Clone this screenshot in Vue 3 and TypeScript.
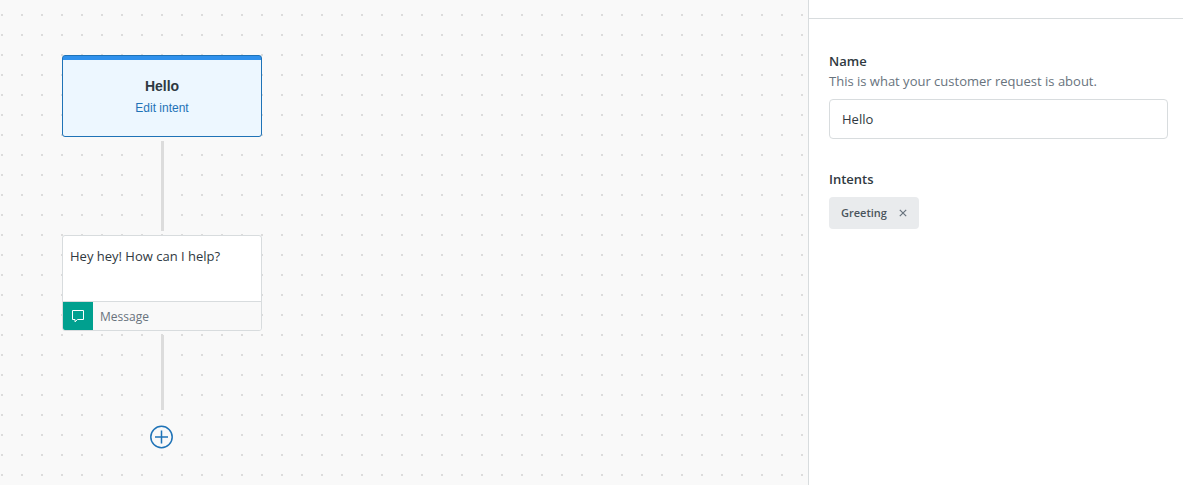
<script setup lang="ts">
import { ref } from 'vue'

const name = ref('Hello')
const intents = ref<string[]>(['Greeting'])

function removeIntent(intent: string) {
  intents.value = intents.value.filter((item) => item !== intent)
}
</script>

<template>
  <div class="builder">
    <main class="canvas">
      <div class="flow">
        <section class="node intent-node">
          <h2 class="intent-title">Hello</h2>
          <a class="intent-link" href="#">Edit intent</a>
        </section>
        <div class="connector"></div>
        <section class="node message-node">
          <p class="message-text">Hey hey! How can I help?</p>
          <footer class="message-footer">
            <span class="message-icon">
              <svg width="14" height="14" viewBox="0 0 14 14" fill="none" stroke="#fff" aria-hidden="true">
                <path d="M1.500 1.500H12.500V10.500H6.500L4 12.800V10.500H1.500Z" />
              </svg>
            </span>
            <span class="message-type">Message</span>
          </footer>
        </section>
        <div class="connector short"></div>
        <button class="add" type="button" aria-label="Add step">
          <svg width="24" height="24" viewBox="0 0 24 24" fill="none" stroke="#1f73b7" stroke-width="1.500" aria-hidden="true">
            <circle cx="11.500" cy="12" r="10.700" />
            <path d="M11.500 5.500V18.500M5 12H18" />
          </svg>
        </button>
      </div>
    </main>

    <aside class="panel">
      <header class="panel-header"></header>
      <form class="panel-body" @submit.prevent>
        <div class="field">
          <label class="label" for="name">Name</label>
          <p id="name-hint" class="hint">This is what your customer request is about.</p>
          <input id="name" v-model="name" class="input" type="text" aria-describedby="name-hint" />
        </div>
        <div class="field" role="group" aria-labelledby="intents-label">
          <span id="intents-label" class="label">Intents</span>
          <div class="tags">
            <span v-for="intent in intents" :key="intent" class="tag">
              {{ intent }}
              <button class="tag-remove" type="button" :aria-label="`Remove ${intent}`" @click="removeIntent(intent)">
                <svg width="8" height="8" viewBox="0 0 8 8" fill="none" stroke="#68737d" stroke-width="1.200" aria-hidden="true">
                  <path d="M0.800 0.800L7.200 7.200M7.200 0.800L0.800 7.200" />
                </svg>
              </button>
            </span>
          </div>
        </div>
      </form>
    </aside>
  </div>
</template>

<style>
body {
  margin: 0;
}
</style>

<style scoped>
.builder {
  display: flex;
  min-height: 100vh;
  font-family: "Open Sans", "Noto Sans", sans-serif;
  font-size: 13px;
  line-height: 20px;
  color: #2f3941;
}

.canvas {
  flex: 1;
  padding: 55px 62px 36px;
  background-color: #f9f9f9;
  background-image: conic-gradient(from 270deg at 2px 2px, #dcdcdc 90deg, transparent 0);
  background-size: 20px 20px;
  background-position: 1px 14px;
}

.flow {
  display: flex;
  flex-direction: column;
  align-items: center;
  gap: 4px;
  width: 200px;
}

.node {
  box-sizing: border-box;
  width: 100%;
  border: 1px solid #d8dcde;
  border-radius: 3px;
  overflow: hidden;
}

.intent-node {
  display: flex;
  flex-direction: column;
  align-items: center;
  height: 82px;
  padding-top: 20px;
  border-color: #1f73b7;
  background: linear-gradient(#3091ec 4px, #edf7ff 4px);
  font-family: "Liberation Sans", Arial, sans-serif;
}

.intent-title {
  margin: 0;
  font-size: 14px;
  line-height: 20px;
  font-weight: 700;
}

.intent-link {
  font-size: 12px;
  line-height: 24px;
  color: #1f73b7;
  text-decoration: none;
}

.connector {
  width: 3px;
  height: 90px;
  background: #dcdcdc;
}

.connector.short {
  height: 75px;
}

.message-node {
  background: #fff;
}

.message-text {
  min-height: 55px;
  margin: 0;
  padding: 10px 7px 0;
}

.message-footer {
  display: flex;
  height: 28px;
  border-top: 1px solid #d8dcde;
  background: #f9f9f9;
}

.message-icon {
  display: flex;
  align-items: center;
  justify-content: center;
  width: 30px;
  background: #00a08f;
}

.message-type {
  padding-left: 7px;
  font-size: 12px;
  line-height: 29px;
  color: #68737d;
}

.add {
  display: flex;
  margin-top: 11px;
  padding: 0;
  border: 0;
  border-radius: 50%;
  background: #f9f9f9;
  cursor: pointer;
}

.panel {
  box-sizing: border-box;
  width: 375px;
  border-left: 1px solid #d8dcde;
  background: #fff;
}

.panel-header {
  height: 18px;
  border-bottom: 1px solid #d8dcde;
}

.panel-body {
  display: flex;
  flex-direction: column;
  gap: 30px;
  padding: 32px 15px 32px 20px;
}

.label {
  display: block;
  font-weight: 600;
}

.hint {
  margin: 0;
  color: #68737d;
}

.input {
  box-sizing: border-box;
  display: block;
  width: 100%;
  height: 40px;
  margin-top: 8px;
  padding: 0 12px;
  border: 1px solid #d8dcde;
  border-radius: 4px;
  background: #fff;
  font: inherit;
  color: inherit;
}

.tags {
  display: flex;
  gap: 8px;
  margin-top: 8px;
}

.tag {
  display: flex;
  align-items: center;
  gap: 12px;
  height: 32px;
  padding: 0 12px;
  border-radius: 4px;
  background: #e9ebed;
  font-size: 11px;
  font-weight: 600;
  color: #49545c;
}

.tag-remove {
  display: flex;
  padding: 0;
  border: 0;
  background: none;
  cursor: pointer;
}
</style>
